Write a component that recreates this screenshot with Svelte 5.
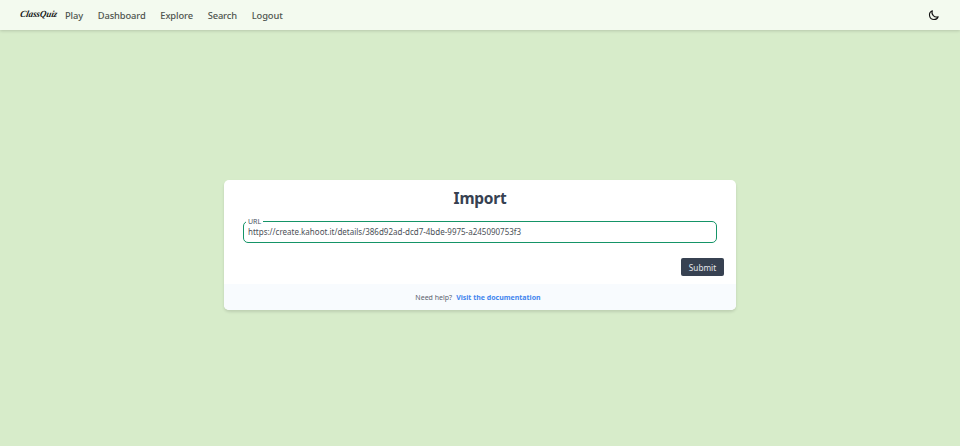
<script>
  const links = ['Play', 'Dashboard', 'Explore', 'Search', 'Logout'];
  let url = $state('https://create.kahoot.it/details/386d92ad-dcd7-4bde-9975-a245090753f3');
</script>

<div class="page">
  <nav>
    <a class="brand" href="#home" aria-label="ClassQuiz">
      <svg width="40" height="14" viewBox="0 0 40 14">
        <text x="0.5" y="9.5" textLength="37" lengthAdjust="spacingAndGlyphs" transform="translate(2 0) skewX(-10)">ClassQuiz</text>
      </svg>
    </a>
    <div class="links">
      {#each links as link}
        <a href="#{link}">{link}</a>
      {/each}
    </div>
    <button class="theme" aria-label="Toggle theme">
      <svg width="12" height="12" viewBox="0 0 24 24" fill="none" stroke="currentColor" stroke-width="2.2" stroke-linecap="round" stroke-linejoin="round">
        <path d="M20.354 15.354A9 9 0 018.646 3.646 9.003 9.003 0 0012 21a9.003 9.003 0 008.354-5.646z" />
      </svg>
    </button>
  </nav>

  <main>
    <section class="card">
      <div class="body">
        <h1>Import</h1>
        <fieldset>
          <legend>URL</legend>
          <input type="text" aria-label="URL" bind:value={url} />
        </fieldset>
        <div class="actions"><button class="submit">Submit</button></div>
      </div>
      <footer>
        <span>Need help?</span>
        <a href="#docs">Visit the documentation</a>
      </footer>
    </section>
  </main>
</div>

<style>
  :global(body) { margin: 0; }
  .page {
    height: 446px;
    display: flex;
    flex-direction: column;
    background: #d7ecca;
    font-family: "Noto Sans", sans-serif;
    color: #374151;
    overflow: hidden;
  }
  a { text-decoration: none; color: inherit; }
  button { border: 0; font-family: inherit; }
  nav {
    height: 30px;
    flex: none;
    box-sizing: border-box;
    display: flex;
    align-items: center;
    padding: 0 20px 0 19px;
    background: #f3faef;
    box-shadow: 0 1px 3px rgba(0, 0, 0, 0.16);
  }
  .brand { display: flex; width: 46px; color: #111; }
  .brand svg { display: block; overflow: visible; }
  .brand text {
    font: italic bold 9.5px "Liberation Serif", serif;
    fill: #111;
  }
  .links { display: flex; gap: 14.7px; flex: 1; padding-top: 1px; }
  .links a {
    font-size: 9.33px;
    line-height: 14px;
    font-weight: 500;
    letter-spacing: -0.11px;
    color: #4e544e;
  }
  .theme { display: flex; padding: 0; background: none; color: #111; }
  main {
    flex: 1;
    display: flex;
    justify-content: center;
    align-items: flex-start;
    padding-top: 150px;
  }
  .card {
    width: 512px;
    height: 130px;
    display: flex;
    flex-direction: column;
    background: #fff;
    border-radius: 5px;
    overflow: hidden;
    box-shadow: 0 2px 3px rgba(0, 0, 0, 0.12);
  }
  .body { flex: 1; }
  h1 {
    margin: 7px 0 0;
    text-align: center;
    font-size: 15.5px;
    line-height: 22px;
    font-weight: 700;
    letter-spacing: -0.25px;
  }
  fieldset {
    box-sizing: border-box;
    height: 27px;
    min-width: 0;
    margin: 7px 19px 0;
    padding: 0 2px;
    border: 1px solid #159467;
    border-radius: 5px;
  }
  legend {
    height: 10px;
    padding: 0 2px;
    font-size: 7px;
    line-height: 11px;
    color: #4b5563;
  }
  input {
    display: block;
    width: 100%;
    height: 12px;
    box-sizing: border-box;
    margin: 0;
    padding: 0 2px;
    border: 0;
    outline: 0;
    background: none;
    font: 8px/12px "Noto Sans", sans-serif;
    color: #4b5057;
  }
  .actions { display: flex; justify-content: flex-end; padding: 15px 12px 0; }
  .submit {
    width: 43px;
    height: 18px;
    padding: 1px 0 0;
    border-radius: 2px;
    background: #374151;
    color: #e5e7eb;
    font-size: 8.2px;
    line-height: 17px;
  }
  footer {
    height: 26px;
    display: flex;
    justify-content: center;
    align-items: center;
    gap: 4px;
    padding-right: 4px;
    background: #f8fbfe;
    font-size: 7px;
    color: #5b6270;
  }
  footer a { color: #4285ee; font-weight: 700; }
</style>
